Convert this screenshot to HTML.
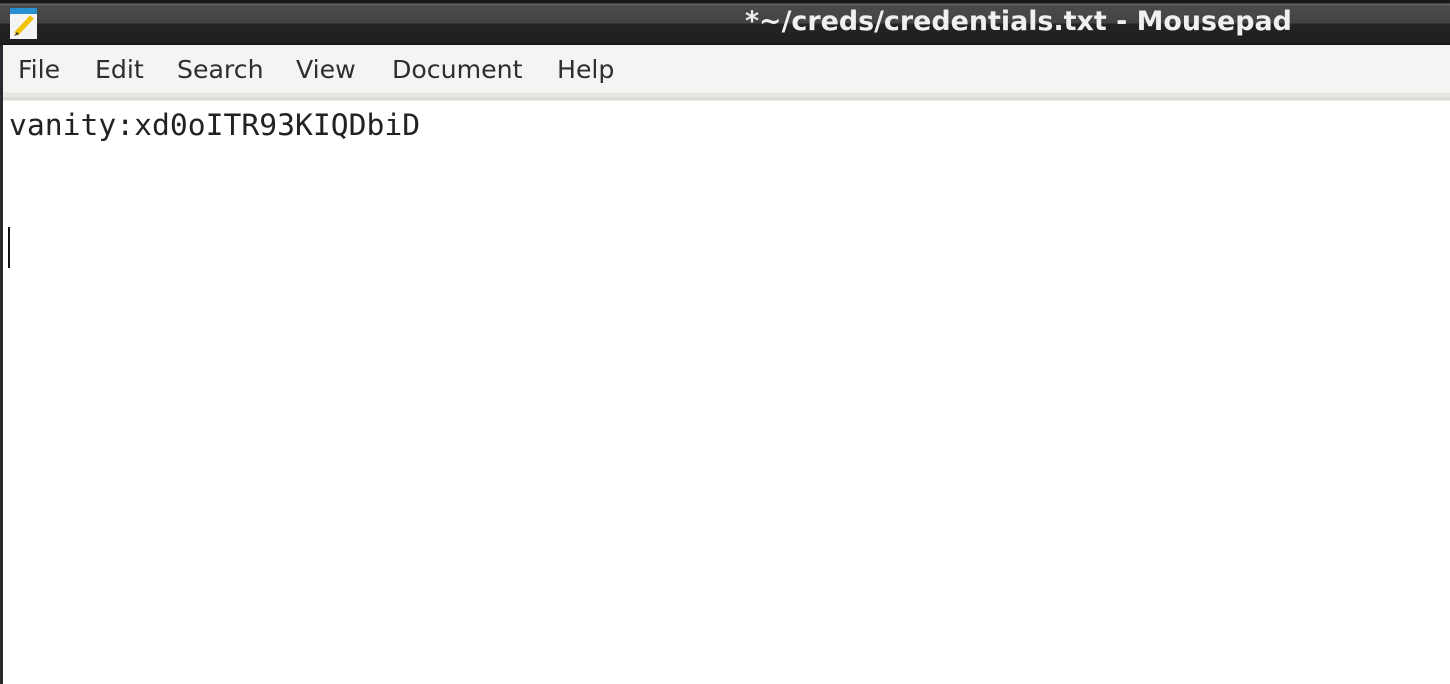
<!DOCTYPE html>
<html><head><style>
html,body{margin:0;padding:0;width:1450px;height:684px;overflow:hidden;background:#fff;}
#tb{position:absolute;left:0;top:0;width:1450px;height:45px;background:linear-gradient(#1a1a1a 0,#1a1a1a 3px,#6a6a6a 4px,#4a4a4a 6px,#444 23px,#232323 24px,#202020 42px,#151515 45px);}
#title{position:absolute;left:745px;top:6px;font:bold 26.9px "DejaVu Sans","Liberation Sans",sans-serif;color:#f0f0f0;white-space:nowrap;}
#icon{position:absolute;left:10px;top:8px;width:27px;height:31px;background:#f4f4f4;}
#icon .b{position:absolute;left:0;top:0;width:27px;height:6px;background:#2a8fd0;}
#menu{position:absolute;left:0;top:45px;width:1450px;height:47px;background:#f5f4f2;}
.m{position:absolute;top:10px;font:25.2px "DejaVu Sans","Liberation Sans",sans-serif;color:#2e2e2e;}
#sep{position:absolute;left:0;top:92px;width:1450px;height:9px;background:linear-gradient(#f5f4f2 0,#e4e3e0 2px,#ecebe8 4px,#dcdbd8 6px,#dcdbd8 8px,#fff 9px);}
#left{position:absolute;left:0;top:45px;width:3px;height:639px;background:#2a2a2e;}
#txt{position:absolute;left:9px;top:108px;font:29.7px "DejaVu Sans Mono","Liberation Mono",monospace;color:#222;white-space:pre;}
#cur{position:absolute;left:8px;top:227px;width:2px;height:41px;background:#111;}
</style></head><body>
<div id="tb"><div id="icon"><div class="b"></div>
<svg width="27" height="31" style="position:absolute;left:0;top:0"><path d="M6 26 L22 9" stroke="#f2c300" stroke-width="5"/><path d="M4 28 L7 24 L9 26 Z" fill="#333"/></svg></div>
<div id="title">*~/creds/credentials.txt - Mousepad</div></div>
<div id="menu">
<span class="m" style="left:18px">File</span>
<span class="m" style="left:95px">Edit</span>
<span class="m" style="left:177px">Search</span>
<span class="m" style="left:296px">View</span>
<span class="m" style="left:392px">Document</span>
<span class="m" style="left:557px">Help</span>
</div>
<div id="sep"></div>
<div id="left"></div>
<div id="txt">vanity:xd0oITR93KIQDbiD</div>
<div id="cur"></div>
</body></html>
